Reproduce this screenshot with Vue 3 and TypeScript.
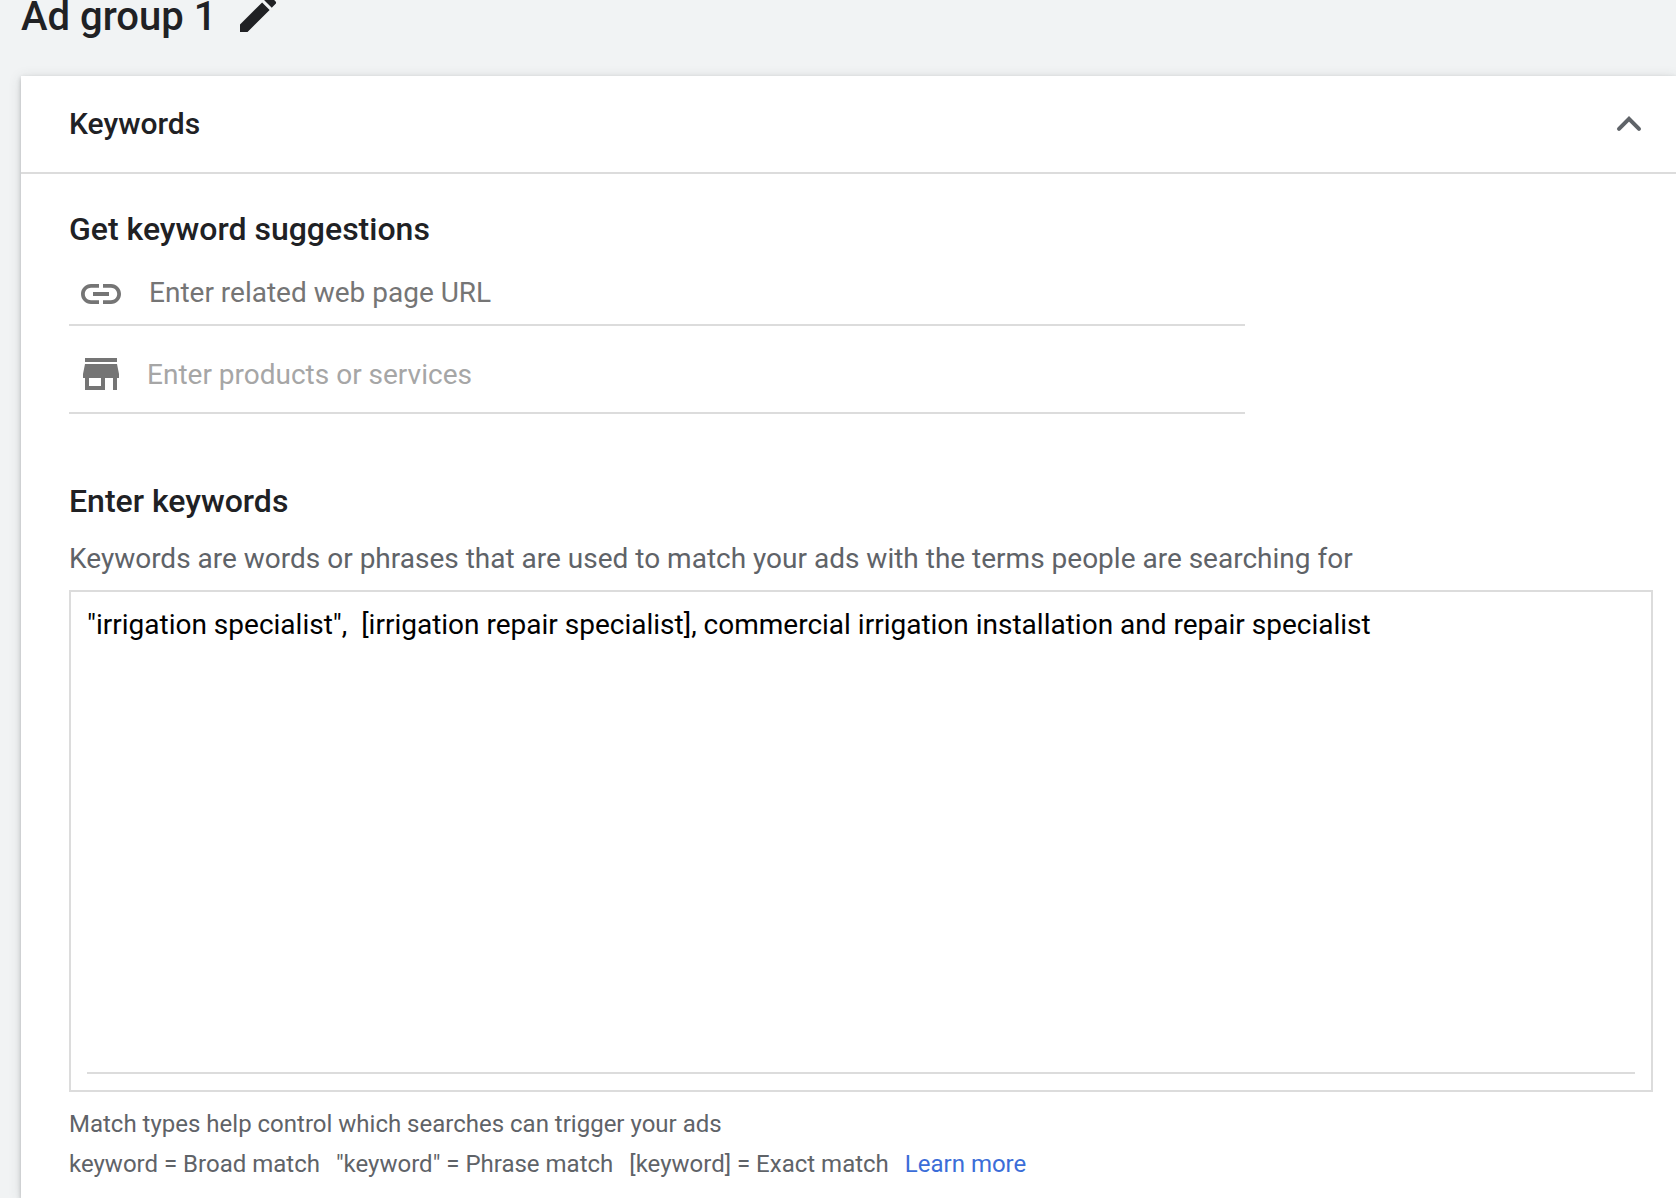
<script setup lang="ts">
import { ref } from 'vue'

interface MatchType {
  syntax: string
  label: string
}

const expanded = ref(true)
const pageUrl = ref('')
const products = ref('')
const keywords = ref(
  '"irrigation specialist",  [irrigation repair specialist], commercial irrigation installation and repair specialist',
)

const matchTypes: MatchType[] = [
  { syntax: 'keyword', label: 'Broad match' },
  { syntax: '"keyword"', label: 'Phrase match' },
  { syntax: '[keyword]', label: 'Exact match' },
]
</script>

<template>
  <main class="page">
    <header class="group-header">
      <h1 class="group-title">Ad group 1</h1>
      <button class="icon-button" type="button" aria-label="Edit ad group name">
        <svg class="icon" viewBox="0 0 24 24" aria-hidden="true">
          <path d="M3 17.25V21h3.75L17.81 9.94l-3.75-3.75L3 17.25zM20.71 7.04a1 1 0 0 0 0-1.41l-2.34-2.34a1 1 0 0 0-1.41 0l-1.83 1.83 3.75 3.75 1.83-1.83z" />
        </svg>
      </button>
    </header>

    <section class="card">
      <div class="card-header">
        <h2 class="card-title">Keywords</h2>
        <button
          class="icon-button toggle"
          type="button"
          aria-label="Toggle keywords"
          :aria-expanded="expanded"
          @click="expanded = !expanded"
        >
          <svg class="icon" viewBox="0 0 24 24" aria-hidden="true">
            <path class="chevron" d="M7 14.4L12 9.4l5 5" />
          </svg>
        </button>
      </div>

      <div v-if="expanded" class="card-body">
        <h3 class="section-title">Get keyword suggestions</h3>
        <label class="field">
          <svg class="icon" viewBox="0 0 24 24" aria-hidden="true">
            <path d="M3.9 12c0-1.71 1.39-3.1 3.1-3.1h4V7H7c-2.76 0-5 2.24-5 5s2.24 5 5 5h4v-1.9H7c-1.71 0-3.1-1.39-3.1-3.1zM8 13h8v-2H8v2zm9-6h-4v1.9h4c1.71 0 3.1 1.39 3.1 3.1s-1.39 3.1-3.1 3.1h-4V17h4c2.76 0 5-2.24 5-5s-2.24-5-5-5z" />
          </svg>
          <input v-model="pageUrl" class="field-input" type="text" placeholder="Enter related web page URL" aria-label="Related web page URL" />
        </label>
        <label class="field products">
          <svg class="icon" viewBox="0 0 24 24" aria-hidden="true">
            <path d="M20 4H4v2h16V4zm1 10v-2l-1-5H4l-1 5v2h1v6h10v-6h4v6h2v-6h1zm-9 4H6v-4h6v4z" />
          </svg>
          <input v-model="products" class="field-input" type="text" placeholder="Enter products or services" aria-label="Products or services" />
        </label>

        <h3 class="section-title enter-title">
          <label for="keywords">Enter keywords</label>
        </h3>
        <p class="description">
          Keywords are words or phrases that are used to match your ads with the terms people are searching for
        </p>
        <div class="keyword-box">
          <textarea id="keywords" v-model="keywords" class="keyword-input" spellcheck="false"></textarea>
        </div>

        <div class="help">
          <p class="help-line">Match types help control which searches can trigger your ads</p>
          <p class="help-line match-types">
            <span v-for="type in matchTypes" :key="type.syntax">{{ type.syntax }} = {{ type.label }}</span>
            <a class="link" href="#">Learn more</a>
          </p>
        </div>
      </div>
    </section>
  </main>
</template>

<style>
body {
  margin: 0;
  background: #f1f3f4;
}
</style>

<style scoped>
.page {
  box-sizing: border-box;
  display: flex;
  flex-direction: column;
  min-height: 100vh;
  padding-left: 21px;
  overflow: hidden;
  background: #f1f3f4;
  color: #202124;
  font-family: Roboto, "Liberation Sans", sans-serif;
  font-size: 28px;
}

h1,
h2,
h3,
p {
  margin: 0;
  font-weight: 500;
}

.group-header {
  display: flex;
  align-items: flex-start;
  gap: 18px;
  margin: -10px 0 32px;
}

.group-title {
  font-size: 40px;
  line-height: 54px;
}

.icon-button {
  display: flex;
  padding: 0;
  border: 0;
  background: none;
  color: inherit;
  cursor: pointer;
}

.icon {
  flex: none;
  display: block;
  width: 48px;
  height: 48px;
  fill: currentColor;
}

.card {
  flex: 1;
  background: #fff;
  box-shadow: 0 2px 4px rgba(60, 64, 67, 0.3), 0 2px 12px rgba(60, 64, 67, 0.15);
}

.card-header {
  display: flex;
  align-items: center;
  justify-content: space-between;
  height: 96px;
  padding: 0 23px 0 48px;
  border-bottom: 2px solid #dcdcdc;
}

.card-title {
  font-size: 30px;
  line-height: 40px;
}

.toggle {
  color: #5f6368;
}

.chevron {
  fill: none;
  stroke: currentColor;
  stroke-width: 2;
  stroke-linecap: round;
}

.card-body {
  padding: 36px 23px 12px 48px;
}

.section-title {
  font-size: 32px;
  line-height: 38px;
}

.field {
  box-sizing: border-box;
  display: flex;
  align-items: center;
  gap: 24px;
  max-width: 1176px;
  height: 62px;
  margin-top: 16px;
  padding-left: 8px;
  border-bottom: 2px solid #dcdcdc;
  color: #757575;
}

.products {
  gap: 22px;
  height: 88px;
  margin-top: 0;
  padding-top: 10px;
}

.field-input {
  flex: 1;
  min-width: 0;
  padding: 0 0 2px;
  border: 0;
  outline: 0;
  background: none;
  color: #202124;
  font: inherit;
  line-height: 36px;
}

.products .field-input {
  padding: 2px 0 0;
}

.field-input::placeholder {
  color: #757575;
  opacity: 1;
}

.products .field-input::placeholder {
  color: #a6a6a6;
}

.enter-title {
  margin-top: 68px;
}

.description {
  margin-top: 22px;
  color: #5f6368;
  font-weight: 400;
  line-height: 34px;
}

.keyword-box {
  margin-top: 14px;
  padding: 16px;
  border: 2px solid #dcdcdc;
}

.keyword-input {
  box-sizing: border-box;
  display: block;
  width: 100%;
  height: 466px;
  padding: 0;
  border: 0;
  border-bottom: 2px solid #dcdcdc;
  outline: 0;
  resize: none;
  background: none;
  color: #000;
  font: inherit;
  line-height: 34px;
}

.help {
  margin-top: 12px;
  color: #5f6368;
  font-size: 24px;
  line-height: 40px;
}

.help-line {
  font-weight: 400;
}

.match-types {
  display: flex;
  flex-wrap: wrap;
  column-gap: 16px;
}

.link {
  color: #3b6dd8;
  text-decoration: none;
}
</style>
